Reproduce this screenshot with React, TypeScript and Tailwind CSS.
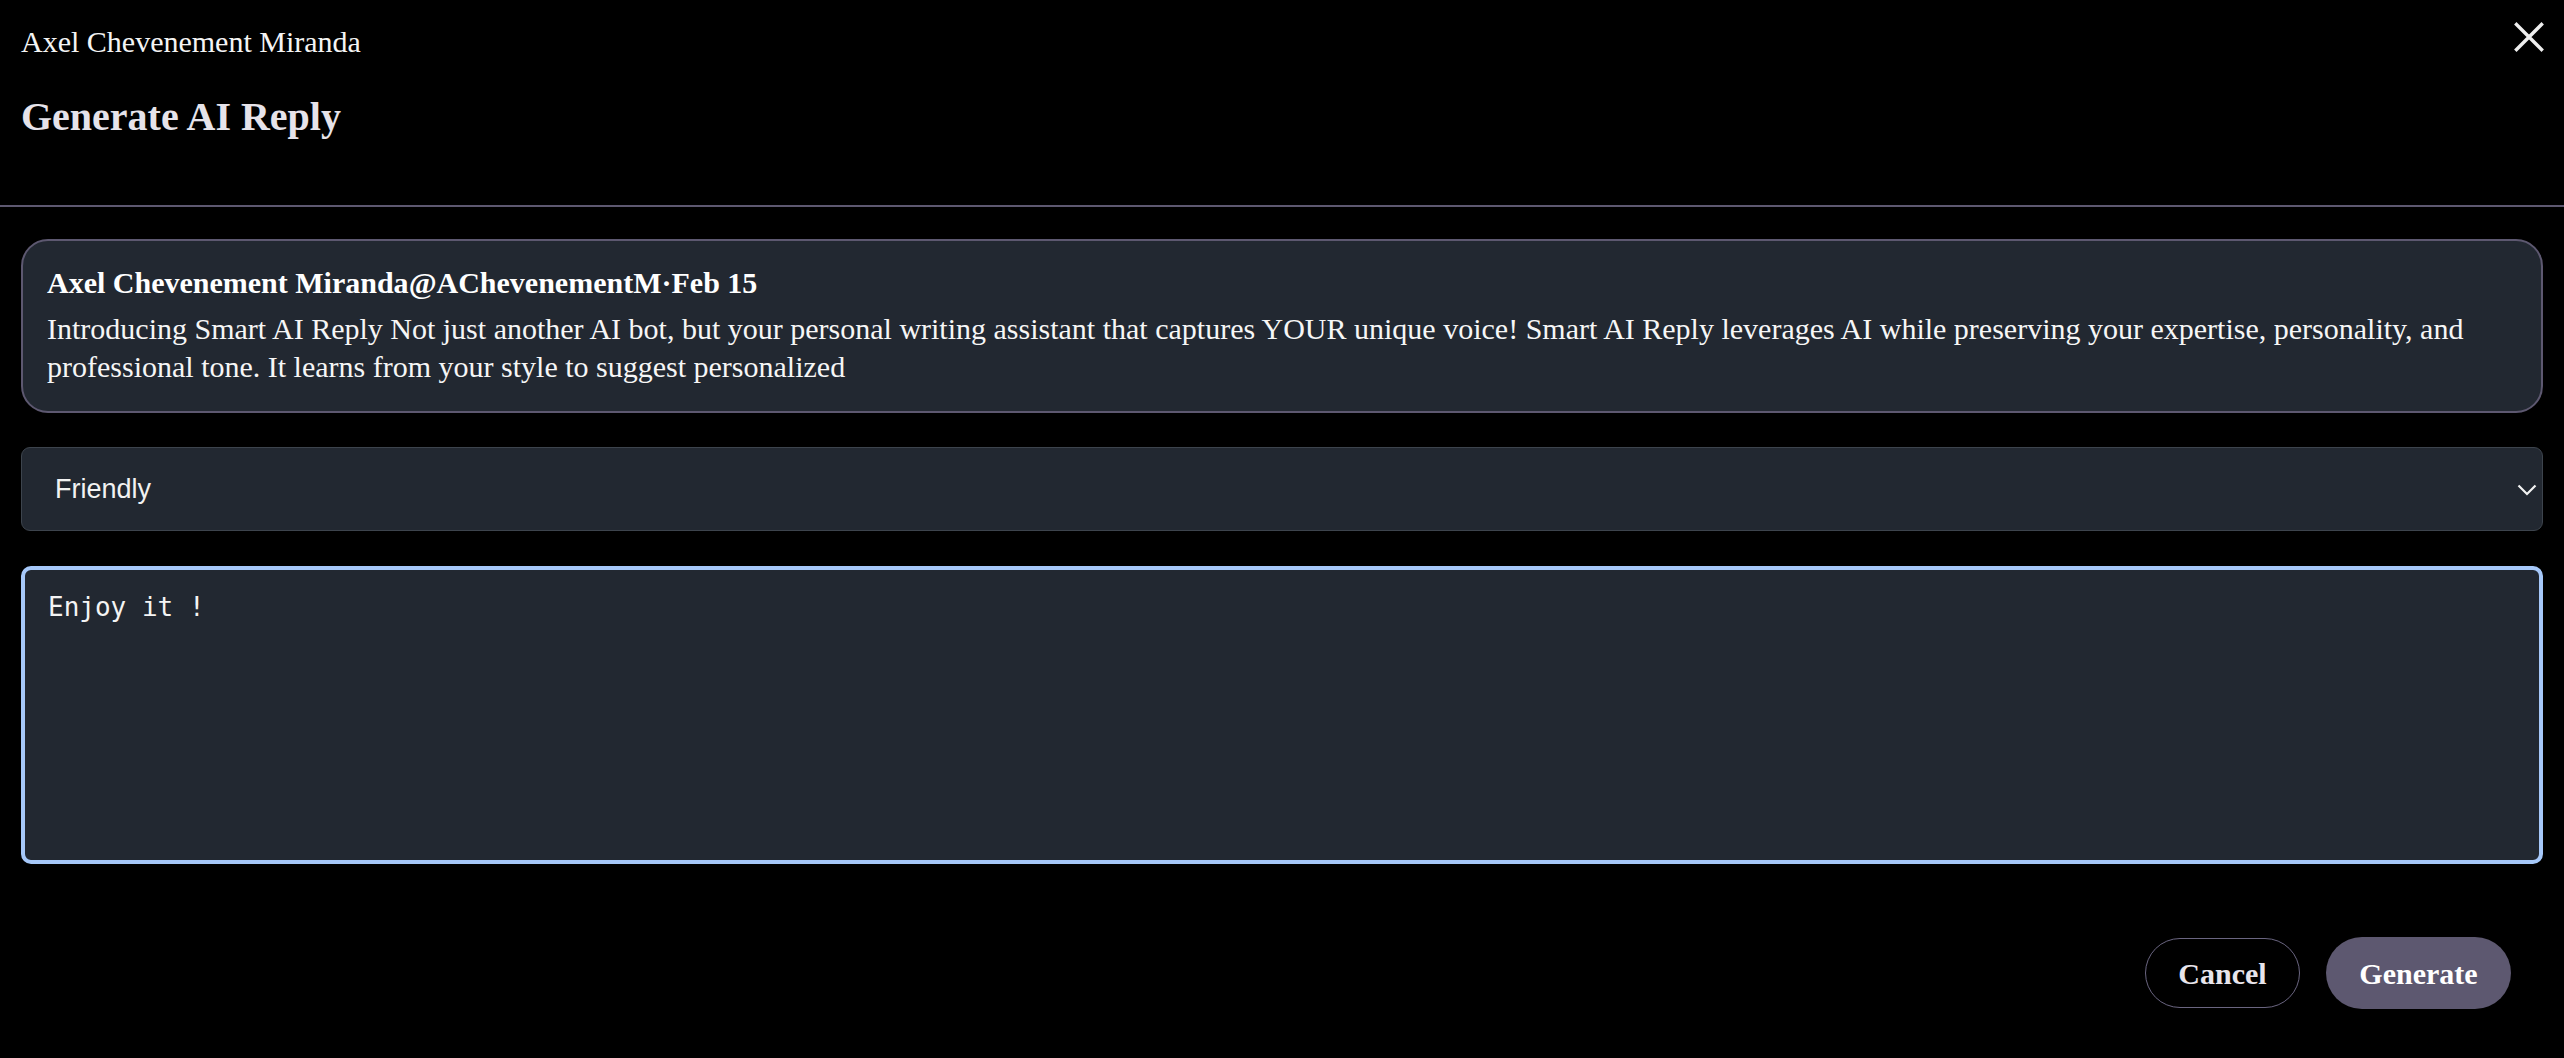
import { useEffect, useRef, useState } from "react";

const TONES = ["Friendly", "Professional", "Witty", "Supportive", "Curious"];

const tweet = {
  author: "Axel Chevenement Miranda",
  handle: "@AChevenementM",
  date: "Feb 15",
  text: "Introducing Smart AI Reply Not just another AI bot, but your personal writing assistant that captures YOUR unique voice! Smart AI Reply leverages AI while preserving your expertise, personality, and professional tone. It learns from your style to suggest personalized",
};

function CloseIcon() {
  return (
    <svg width="30" height="30" viewBox="0 0 30 30" fill="none">
      <path
        d="M2.5 2.5 L27.5 27.5 M27.5 2.5 L2.5 27.5"
        stroke="#eeeeee"
        strokeWidth="3.4"
        strokeLinecap="square"
      />
    </svg>
  );
}

function Chevron() {
  return (
    <svg width="20" height="12" viewBox="0 0 20 12" fill="none">
      <polyline
        points="1.5,1.5 10,10 18.5,1.5"
        stroke="#f2f2f2"
        strokeWidth="2.2"
        fill="none"
      />
    </svg>
  );
}

export default function App() {
  const [tone, setTone] = useState("Friendly");
  const [reply, setReply] = useState("Enjoy it !");
  const replyRef = useRef<HTMLTextAreaElement>(null);

  // keep the caret at the end of the draft reply
  useEffect(() => {
    const el = replyRef.current;
    if (!el) return;
    el.focus();
    el.setSelectionRange(el.value.length, el.value.length);
  }, []);

  return (
    <div className="min-h-screen bg-black font-['Liberation_Serif',serif] text-[#f2f2f2]">
      {/* Header */}
      <header className="px-[21px] pt-[25px] pb-[66px]">
        <div className="flex items-start justify-between">
          <p className="text-[30px] leading-[34px] text-[#f4f4f4]">
            {tweet.author}
          </p>
          <button className="-mt-[3px] mr-[-1px] flex h-[30px] w-[30px] items-center justify-center">
            <CloseIcon />
          </button>
        </div>
        <h2 className="mt-[35px] text-[40px] font-bold leading-[45px] text-[#e6e3ea]">
          Generate AI Reply
        </h2>
      </header>

      <div className="h-[2px] w-full bg-[#5d5870]" />

      <main className="px-[21px] pt-[32px] pb-[49px]">
        {/* Original tweet */}
        <div className="rounded-[27px] border-2 border-[#5d5870] bg-[#222831] px-[24px] pt-[23px] pb-[25px]">
          <p className="text-[30px] font-bold leading-[38px] text-white">
            {tweet.author}
            {tweet.handle}·{tweet.date}
          </p>
          <p className="mt-[8px] text-[30px] leading-[38px] text-[#f6f6f6]">
            {tweet.text}
          </p>
        </div>

        {/* Tone picker */}
        <div className="relative mt-[34px]">
          <select
            value={tone}
            onChange={(e) => setTone(e.target.value)}
            className="h-[84px] w-full appearance-none rounded-[9px] border-[1.5px] border-[#3d444d] bg-[#222831] pl-[33px] font-['Liberation_Sans',Arial,sans-serif] text-[27px] text-[#f2f2f2] outline-none"
          >
            {TONES.map((t) => (
              <option key={t} value={t}>
                {t}
              </option>
            ))}
          </select>
          <span className="pointer-events-none absolute right-[6px] top-[37px]">
            <Chevron />
          </span>
        </div>

        {/* Reply draft */}
        <textarea
          ref={replyRef}
          value={reply}
          onChange={(e) => setReply(e.target.value)}
          className="mt-[35px] block h-[298px] w-full resize-none rounded-[10px] border-[4px] border-[#a6c8f9] bg-[#222831] px-[23px] py-[22px] font-['DejaVu_Sans_Mono',monospace] text-[26px] leading-[30px] text-[#f4f4f4] caret-white outline-none"
        />

        {/* Actions */}
        <div className="mt-[73px] flex items-center justify-end gap-[26px] pr-[32px]">
          <button className="h-[70px] w-[155px] rounded-full border-[1.5px] border-[#6a6580] bg-transparent text-[30px] font-bold text-[#e8e5ec]">
            Cancel
          </button>
          <button className="h-[72px] w-[185px] rounded-full bg-[#5d5870] text-[30px] font-bold text-white">
            Generate
          </button>
        </div>
      </main>
    </div>
  );
}
